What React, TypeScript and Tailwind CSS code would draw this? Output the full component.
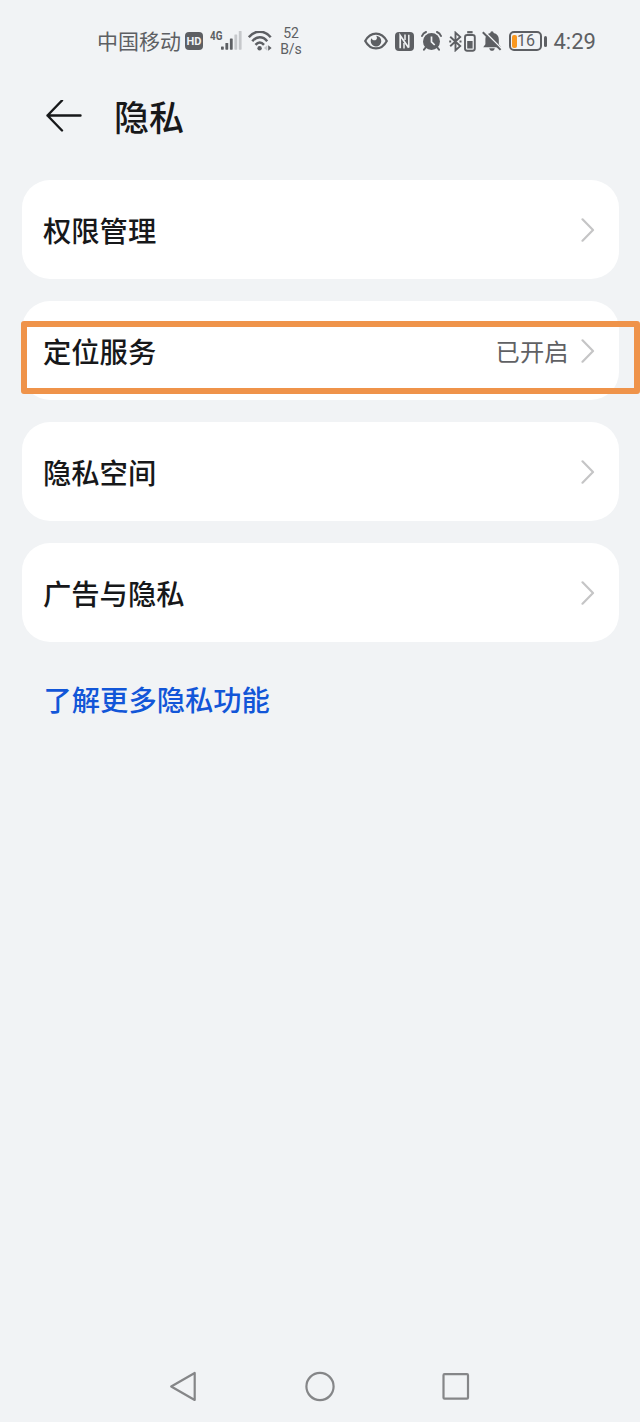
const items = [
  { title: '权限管理' },
  { title: '定位服务', value: '已开启', marked: true },
  { title: '隐私空间' },
  { title: '广告与隐私' },
];

function StatusBar() {
  return (
    <div className="flex h-[82px] items-center pl-[97px] text-[#5d5f63]">
      <span className="w-[84px] whitespace-nowrap text-[21px] leading-none">中国移动</span>
      <span className="ml-[4px] flex h-[18px] w-[18px] items-center justify-center rounded-[4px] bg-[#5d5f63] font-['Roboto'] text-[11px] font-bold leading-none text-[#f1f3f5]">
        HD
      </span>
      <span className="mb-[10px] ml-[7px] w-[11px] origin-left scale-x-[0.82] font-['Roboto'] text-[12px] font-bold leading-none">4G</span>
      <svg className="h-5 w-[21px]" viewBox="0 0 21 20" fill="currentColor">
        <rect x="0" y="15.5" width="2.8" height="3.2" rx=".6" />
        <rect x="4.4" y="12" width="2.8" height="6.7" rx=".6" />
        <rect x="8.9" y="7.5" width="2.8" height="11.2" rx=".6" />
        <rect x="13.4" y="3.5" width="2.8" height="15.2" rx=".6" fill="#c6c8cb" />
        <rect x="17.8" y="0" width="2.8" height="18.7" rx=".6" fill="#c6c8cb" />
      </svg>
      <svg className="ml-[6px] h-5 w-6" viewBox="0 0 24 20" fill="none" stroke="currentColor" strokeWidth="2.5">
        <path d="M.8 6.200C7-1.200 16.500-1.200 22.700 6.200" />
        <path d="M4.300 10.200c4.200-5.200 10.700-5.200 14.900 0" />
        <path d="M7.500 13.900c2.700-3.100 5.800-3.100 8.500 0" />
        <circle cx="11.600" cy="17.200" r="2.200" fill="currentColor" stroke="none" />
        <path d="M19.300 14.300v5.400l-3.400-2.700z" fill="#c6c8cb" stroke="none" />
        <path d="M20.200 14.300v5.400l3.400-2.700z" fill="currentColor" stroke="none" />
      </svg>
      <span className="ml-[6px] w-[26px] text-center font-['Roboto'] text-[14px] leading-4">
        52
        <br />
        B/s
      </span>
      <svg className="ml-[60px] h-[18px] w-6" viewBox="0 0 24 18" fill="none" stroke="currentColor">
        <path d="M1.200 9C6.500-.9 17.500-.9 22.800 9 17.500 18.900 6.500 18.900 1.200 9z" strokeWidth="2.200" />
        <path d="M12 3.800A5.300 5.300 0 1 1 6.700 9c0-1 .3-2 .8-2.800 1.200 2.600 4.300 2.800 5.200.9.500-1.100.2-2.300-.7-3.300z" fill="currentColor" stroke="none" />
      </svg>
      <svg className="ml-[7px] h-[19px] w-[19px]" viewBox="0 0 19 19">
        <rect width="19" height="19" rx="4" fill="currentColor" />
        <path d="M5.200 16.200V3.500l8.400 12.200" fill="none" stroke="#f1f3f5" strokeWidth="1.700" />
        <path d="M13.800 2.800v12.700M10 2.500v5.500M9 11v5.500" fill="none" stroke="#f1f3f5" strokeWidth="1.500" />
      </svg>
      <svg className="ml-[7px] h-5 w-[21px]" viewBox="0 0 21 20" fill="none" stroke="currentColor" strokeWidth="2">
        <circle cx="10.500" cy="10.500" r="8.500" fill="currentColor" stroke="none" />
        <path d="M1 5Q2.200 2 5 1M20 5Q18.800 2 16 1" strokeLinecap="round" />
        <path d="M5 16l-2 2.600M16 16l2 2.600" strokeLinecap="round" />
        <path d="M10.500 5.500v5.300l3.200 3.200" stroke="#f1f3f5" strokeWidth="1.700" />
      </svg>
      <svg className="ml-[7px] h-[21px] w-[27px]" viewBox="0 0 27 21" fill="none" stroke="currentColor" strokeWidth="1.900">
        <path d="M1.200 5.700l10 9.400-4.700 4.200V1.700l4.700 4.200-10 9.400" />
        <path d="M.2 10.500h2M10.500 10.500h2" />
        <rect x="16" y="4" width="9.800" height="15.800" rx="2.200" />
        <path d="M18.200 1.200h5.400" strokeWidth="2.200" />
        <rect x="18.200" y="10" width="5.400" height="7.500" fill="currentColor" stroke="none" />
      </svg>
      <svg className="ml-[6px] h-5 w-[20px]" viewBox="0 0 20 20" fill="currentColor">
        <path d="M10 .3c1 0 1.600.7 1.600 1.700 3.400.7 5.200 3 5.200 6v5.200l2.200 3H1.200l2.200-3V8c0-3 1.600-5.300 5-6 0-1 .6-1.700 1.600-1.700z" />
        <path d="M7.200 17.200h5.600c-.5 3.400-5.100 3.400-5.600 0z" />
        <path d="M2.200 .2L20 18" stroke="#f1f3f5" strokeWidth="1.500" />
        <path d="M.8 1.200l17.800 17.700" stroke="currentColor" strokeWidth="2" />
      </svg>
      <span className="ml-[7px] flex h-[20px] w-[33px] items-center rounded-[5px] border-2 border-current pl-[1px]">
        <span className="h-[13px] w-[5px] shrink-0 rounded-[2px] bg-[#f9971e]" />
        <span className="-ml-[1px] w-[20px] text-center font-['Roboto'] text-[16px] leading-none">16</span>
      </span>
      <span className="ml-[2px] h-[11px] w-[2.500px] rounded-full bg-current" />
      <span className="ml-[7px] mt-[2px] font-['Roboto'] text-[22px] leading-none">4:29</span>
    </div>
  );
}

function Chevron() {
  return (
    <svg className="mt-px h-6 w-[14px]" viewBox="0 0 14 24" fill="none" stroke="#c5c5c6" strokeWidth="2.200">
      <path d="M1.500 1.300L12 12 1.500 22.700" strokeLinecap="round" strokeLinejoin="round" />
    </svg>
  );
}

export default function App() {
  return (
    <div className="flex h-[1422px] w-[640px] flex-col overflow-hidden bg-[#f1f3f5] font-['Liberation_Sans','Noto_Sans_CJK_SC',sans-serif] text-[#17181a]">
      <StatusBar />
      <header className="flex h-[97.500px] items-start pl-[46px]">
        <svg className="mt-[18px] h-8 w-9" viewBox="0 0 36 32" fill="none" stroke="currentColor" strokeWidth="2.400">
          <path d="M16 .5L1.500 15.500 16 30.500M1.500 15.500H34.500" strokeLinecap="round" strokeLinejoin="round" />
        </svg>
        <h1 className="ml-[32px] mt-[19px] text-[35px] font-medium leading-[36px]">隐私</h1>
      </header>

      <main className="flex flex-col gap-[22px] px-[21.500px]">
        {items.map((item) => (
          <div key={item.title} className="relative flex h-[99px] items-center rounded-[28px] bg-white pl-[21.500px] pr-[24px]">
            <span className="mt-[7px] flex-1 text-[28.300px] font-medium leading-none">{item.title}</span>
            {item.value && <span className="mr-[12px] mt-[6px] text-[24.300px] leading-none text-[#606164]">{item.value}</span>}
            <Chevron />
            {item.marked && (
              <div className="absolute -right-[21.500px] -left-[.5px] top-[20.500px] h-[73px] rounded-[3px] border-[6px] border-[#ef934a]" />
            )}
          </div>
        ))}
      </main>

      <a className="ml-[43.500px] mt-[43px] text-[28.300px] font-medium leading-[32px] text-[#1256d8]">了解更多隐私功能</a>

      <nav className="mt-auto flex h-[72px] items-center justify-between pl-[168px] pr-[170px] text-[#858688]">
        <svg className="h-8 w-8" viewBox="0 0 32 32" fill="none" stroke="currentColor" strokeWidth="2.200" strokeLinejoin="round">
          <path d="M26.700 3v27L3.200 16.500z" />
        </svg>
        <svg className="h-8 w-8" viewBox="0 0 32 32" fill="none" stroke="currentColor" strokeWidth="2.200">
          <circle cx="16" cy="16.500" r="13.600" />
        </svg>
        <svg className="h-8 w-[30px]" viewBox="0 0 30 32" fill="none" stroke="currentColor" strokeWidth="2.200">
          <rect x="3.500" y="4.200" width="24.500" height="24.500" rx="1" />
        </svg>
      </nav>
    </div>
  );
}
